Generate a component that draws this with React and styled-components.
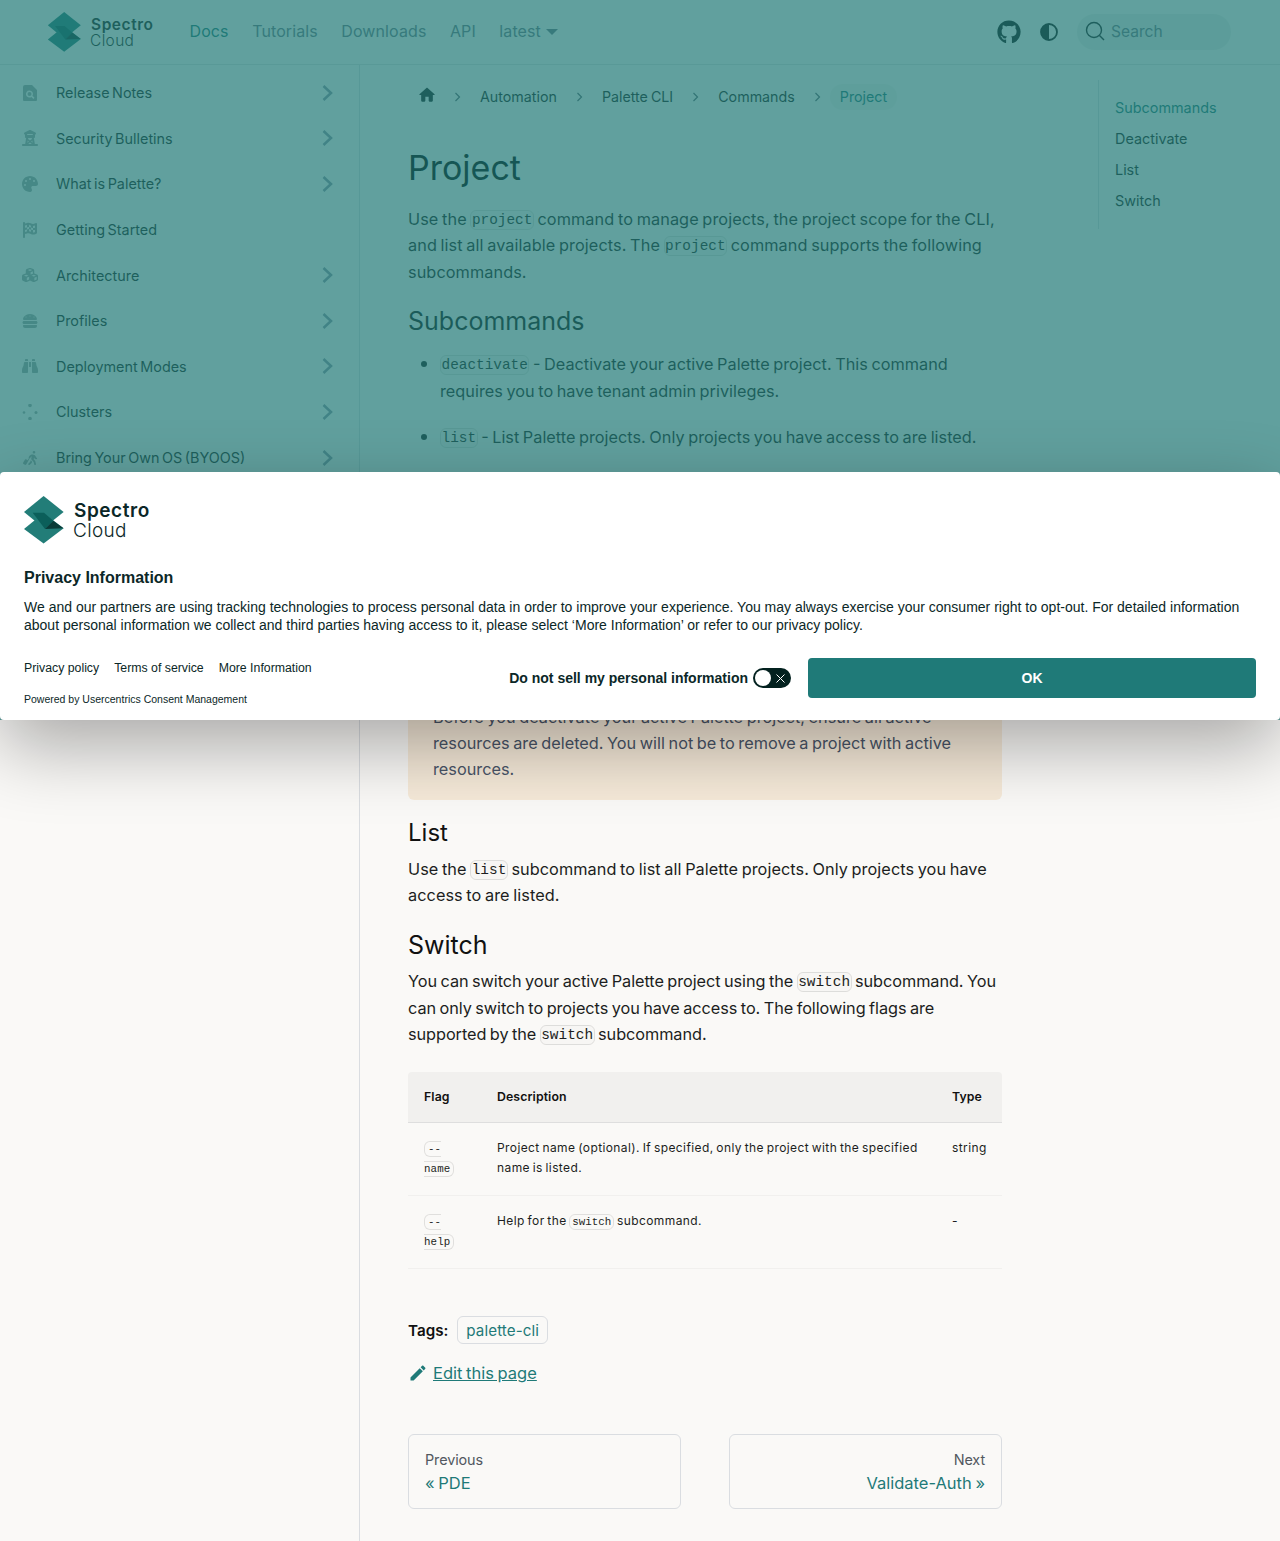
import React from "react";
import styled, { createGlobalStyle } from "styled-components";
import { FaGithub } from "react-icons/fa";
import {
  FaTowerObservation, FaPalette, FaFlagCheckered, FaCubes, FaBurger,
  FaBinoculars, FaPersonWalkingLuggage,
} from "react-icons/fa6";

const TEAL = "#1f7a78";
const Global = createGlobalStyle`
  html, body { margin: 0; padding: 0; background: #faf9f7; }
  body { font-family: Inter, "Noto Sans", sans-serif; color: #111; }
  * { box-sizing: border-box; }
`;

const Page = styled.div`
  position: relative; width: 1280px; height: 1541px; overflow: hidden; background: #faf9f7;
`;
const Navbar = styled.header`
  height: 65px; display: flex; align-items: center; padding: 0 49px 1px 47px;
  border-bottom: 1px solid #e0e0e0;
`;
const NavLinks = styled.nav`
  display: flex; align-items: center; gap: 23.5px; margin: -1px 0 0 36px;
`;
const NavLink = styled.a`
  font-size: 16px; letter-spacing: .1px; color: ${p => (p.$active ? TEAL : "#6f7a88")};
  display: flex; align-items: center; gap: 5px;
`;
const Caret = styled.span`
  width: 0; height: 0; border: 6px solid transparent; border-top: 6px solid #6f7a88; border-bottom: 0; margin-top: 2px;
`;
const NavRight = styled.div`
  margin-left: auto; display: flex; align-items: center;
`;
const GithubIcon = styled(FaGithub)`
  width: 24px; height: 24px; color: #111; margin-right: 19px;
`;
const Search = styled.div`
  width: 154px; height: 36px; border-radius: 18px; background: #ebebea; margin-left: 19px;
  display: flex; align-items: center; padding: 0 0 1px 8px; gap: 6px; color: #6f7a88; font-size: 15.6px;
`;

const LogoWrap = styled.div`
  display: flex; align-items: center; gap: ${p => p.$gap}px; height: ${p => p.$h}px;
`;
const LogoWords = styled.div`
  display: flex; flex-direction: column; font-family: Inter, sans-serif; color: ${p => p.$color};
  font-size: ${p => p.$size}px; line-height: ${p => p.$lh}px; padding-top: 2px;
`;
const LogoTop = styled.span`font-weight: 600; letter-spacing: .55px; margin-left: 1px;`;
const LogoBottom = styled.span`font-weight: 300; letter-spacing: .35px;`;

function Logo({ w, h, gap, size, lh, color }) {
  return (
    <LogoWrap $h={h} $gap={gap}>
      <svg width={w} height={h} viewBox="0 0 40 48">
        <path d="M19.6 0 39.6 16 19.6 32 0 16Z" fill="#227d78" />
        <path d="M19.6 17 39.6 32.3 19.6 47.6 0 33Z" fill="#227d78" />
        <path d="M8.7 16.7H20L29.3 24.7 21 33Z" fill="#0b5f5a" />
        <path d="M21 33 29.3 24.7 39.5 32.3Z" fill="#0a3b38" />
      </svg>
      <LogoWords $size={size} $lh={lh} $color={color}>
        <LogoTop>Spectro</LogoTop>
        <LogoBottom>Cloud</LogoBottom>
      </LogoWords>
    </LogoWrap>
  );
}

const Shell = styled.div`
  display: grid; grid-template-columns: 360px 1fr; height: 1476px;
`;
const Sidebar = styled.aside`
  border-right: 1px solid #dadde1; padding-top: 5px;
`;
const SideItem = styled.div`
  height: 45.6px; display: flex; align-items: center; padding: 0 26px 0 22px;
  font-size: 14.4px; word-spacing: -1.5px; color: #1c1e21;
`;
const SideIcon = styled.span`
  width: 34px; display: flex; color: #a2a8a8;
  svg { width: 16px; height: 16px; display: block; }
`;
const Chevron = styled.svg`
  margin-left: auto; width: 11px; height: 16px; fill: none; stroke: #8f96a8; stroke-width: 2.5;
`;

const FileSearch = () => (
  <svg viewBox="0 0 16 16"><path fill="currentColor" fillRule="evenodd" d="M3 0h7l5 5v10a1 1 0 0 1-1 1H2a1 1 0 0 1-1-1V2a2 2 0 0 1 2-2ZM7.5 5.5a3.5 3.5 0 1 0 1.9 6.4l2 2 1.1-1.1-2-2a3.5 3.5 0 0 0-3-5.3Zm0 1.5a2 2 0 1 1 0 4 2 2 0 0 1 0-4Z" /></svg>
);
const Dots = () => (
  <svg viewBox="0 0 16 16" fill="currentColor"><circle cx="8" cy="1.5" r="1.8" /><circle cx="2" cy="8.5" r="1.3" /><circle cx="14" cy="8.5" r="1.5" /><circle cx="8" cy="14.5" r="1.8" /></svg>
);
const HomeIcon = styled.svg`width: 20px; height: 20px; display: block; margin: -3px -2px 0; fill: currentColor;`;
const PencilIcon = styled.svg`width: 20px; height: 20px; fill: ${TEAL}; flex: none;`;

const items = [
  ["Release Notes", <FileSearch />, true],
  ["Security Bulletins", <FaTowerObservation />, true],
  ["What is Palette?", <FaPalette />, true],
  ["Getting Started", <FaFlagCheckered />, false],
  ["Architecture", <FaCubes />, true],
  ["Profiles", <FaBurger />, true],
  ["Deployment Modes", <FaBinoculars />, true],
  ["Clusters", <Dots />, true],
  ["Bring Your Own OS (BYOOS)", <FaPersonWalkingLuggage />, true],
];

const Main = styled.main`
  display: flex; align-items: flex-start; padding: 19px 0 0 48px;
`;
const Article = styled.article`width: 594px; flex: none;`;
const Crumbs = styled.div`display: flex; align-items: center; height: 26px; margin-left: 1px;`;
const Crumb = styled.span`
  display: flex; align-items: center; height: 26px; padding: 0 10px 2px; border-radius: 13px; font-size: 14.25px;
  word-spacing: -1px; color: ${p => (p.$active ? TEAL : "#1c1e21")}; background: ${p => (p.$active ? "#f1f0ee" : "transparent")};
`;
const Sep = styled.svg`width: 25px; height: 10px; fill: none; stroke: #5f6670; stroke-width: 1.2;`;
const H1 = styled.h1`
  margin: 38px 0 0; font-size: 34px; line-height: 40px; font-weight: 400; color: #000;
`;
const H2 = styled.h2`
  margin: ${p => p.$mt}px 0 0; font-size: 25px; line-height: 32px; font-weight: 400; color: #111;
`;
const H3 = styled.h3`
  margin: ${p => p.$mt}px 0 0; font-size: 24px; line-height: 30px; font-weight: 400; color: #111;
`;
const P = styled.p`
  margin: ${p => p.$mt}px 0 0; font-size: 16.3px; line-height: 26.4px; word-spacing: -1px; color: #1c1e21;
  letter-spacing: ${p => p.$ls || 0}px;
`;
const Code = styled.code`
  font-family: "Liberation Mono", monospace; font-size: 14.4px; line-height: 1; letter-spacing: 0; word-spacing: 0; padding: 1px .5px; border: 1px solid rgba(0,0,0,.1);
  border-radius: 6px; background: rgba(0,0,0,.01); position: relative; top: -1px;
`;
const List = styled.ul`margin: 13px 0 0; padding: 0 0 0 32px;`;
const Li = styled.li`
  font-size: 16.3px; line-height: 26.4px; word-spacing: -1px; color: #1c1e21; margin-bottom: 19px;
  &::marker { font-size: 20px; }
`;
const Alert = styled.div`
  margin-top: 17px; padding: 17px 25px 18px; border-radius: 6px; background: #f6ead9;
  font-size: 16.3px; line-height: 26px; word-spacing: -1px; color: #4a5568;
`;
const AlertTitle = styled.div`font-weight: 700; text-transform: uppercase; font-size: 14px; margin-bottom: 14px;`;

const Table = styled.table`
  width: 594px; margin-top: 24px; border-collapse: collapse; table-layout: fixed; font-size: 12px; letter-spacing: .4px; word-spacing: -1px;
`;
const Th = styled.th`
  height: 51px; padding: 0 16px; text-align: left; font-weight: 600; background: #f1f0ee; border-bottom: 1px solid #dedede;
  font-size: 12.3px; color: #111; letter-spacing: .1px;
  &:first-child { border-top-left-radius: 4px; } &:last-child { border-top-right-radius: 4px; }
`;
const Td = styled.td`
  padding: 15px 16px 18px; vertical-align: top; line-height: 19.5px; color: #1c1e21; border-bottom: 1px solid #f1f0ee;
`;
const TinyCode = styled.code`
  font-family: "Liberation Mono", monospace; font-size: 10.8px; line-height: 1; letter-spacing: 0; word-spacing: 0; padding: 1px 2px; border: 1px solid rgba(0,0,0,.1); border-radius: 6px;
`;
const FlagCode = styled(TinyCode)`padding: 1px 3px; letter-spacing: .1px;`;

const TagRow = styled.div`display: flex; align-items: center; gap: 9px; margin-top: 47px;`;
const TagLabel = styled.b`font-size: 15.2px; font-weight: 600;`;
const Tag = styled.span`
  height: 28px; padding: 0 8px; border: 1px solid #dadde1; border-radius: 6px; display: flex; align-items: center;
  color: ${TEAL}; font-size: 15.15px; letter-spacing: .1px;
`;
const EditRow = styled.a`
  display: flex; align-items: center; gap: 5px; margin-top: 15px; height: 28px; color: ${TEAL}; font-size: 16.5px; word-spacing: -1px;
  text-decoration: underline;
`;
const Pager = styled.div`
  display: grid; grid-template-columns: 273px 273px; justify-content: space-between; margin-top: 47px;
`;
const PageCard = styled.div`
  height: 75px; padding: 15px 16px; border: 1px solid #dadde1; border-radius: 6px; text-align: ${p => (p.$right ? "right" : "left")};
`;
const CardSub = styled.div`font-size: 14.4px; line-height: 20px; color: #525860; letter-spacing: -.1px;`;
const CardTitle = styled.div`font-size: 16.5px; line-height: 26px; color: ${TEAL}; word-spacing: -1px;`;

const Toc = styled.aside`
  margin: -4px 0 0 96px; padding: 12px 0 13px 16px; border-left: 1px solid #dadde1; width: 160px;
`;
const TocLink = styled.div`
  font-size: 14.4px; line-height: 31px; color: ${p => (p.$active ? TEAL : "#1c1e21")};
`;

const Overlay = styled.div`
  position: absolute; top: 0; left: 0; width: 100%; height: 720px; background: rgba(32,122,120,.7);
`;
const Banner = styled.section`
  position: absolute; top: 472px; left: 0; width: 100%; height: 248px; padding: 24px; background: #fff; border-radius: 4px;
  box-shadow: 0 26px 74px rgba(0,0,0,.33); font-family: "Liberation Sans", Arial, sans-serif; color: #0b2727;
`;
const BannerTitle = styled.div`margin-top: 24px; font-size: 16px; line-height: 20px; font-weight: 700;`;
const BannerText = styled.div`margin-top: 10px; font-size: 14px; line-height: 18px;`;
const BannerFooter = styled.div`display: flex; justify-content: space-between; align-items: flex-start; margin-top: 24px;`;
const BannerLinks = styled.div`display: flex; gap: 15px; font-size: 12.3px; line-height: 20px;`;
const Powered = styled.div`margin-top: 14px; font-size: 10.5px; line-height: 14px;`;
const Controls = styled.div`display: flex; align-items: center;`;
const Opt = styled.span`font-size: 14px; font-weight: 700;`;
const Toggle = styled.span`
  position: relative; width: 38px; height: 20px; border-radius: 10px; background: #03211f; margin: 0 17px 0 5px; display: block;
`;
const Knob = styled.span`
  position: absolute; left: 2px; top: 2px; width: 16px; height: 16px; border-radius: 50%; background: #fff;
`;
const ToggleX = styled.svg`
  position: absolute; right: 6px; top: 5.5px; width: 9px; height: 9px; stroke: #fff; stroke-width: 1;
`;
const OkButton = styled.button`
  width: 448px; height: 40px; border: 0; border-radius: 4px; background: ${TEAL}; color: #fff;
  font: 700 14px "Liberation Sans", Arial, sans-serif;
`;

const Separator = () => (<Sep viewBox="0 0 25 10"><path d="M10.5 1 14.5 5 10.5 9" /></Sep>);

export default function App() {
  return (
    <Page>
      <Global />
      <Navbar>
        <Logo w={35} h={40} gap={8} size={15.5} lh={16} color="#1c1e21" />
        <NavLinks>
          <NavLink $active>Docs</NavLink>
          <NavLink>Tutorials</NavLink>
          <NavLink>Downloads</NavLink>
          <NavLink>API</NavLink>
          <NavLink>latest<Caret /></NavLink>
        </NavLinks>
        <NavRight>
          <GithubIcon />
          <svg width="18" height="18" viewBox="0 0 18 18"><circle cx="9" cy="9" r="8" fill="none" stroke="#111" strokeWidth="1.8" /><path d="M9 1a8 8 0 0 0 0 16Z" fill="#111" /></svg>
          <Search>
            <svg width="20" height="20" viewBox="0 0 20 20" fill="none" stroke="#1c1e21" strokeWidth="1.4"><circle cx="9" cy="9" r="7.5" /><path d="M14.5 14.5 19 19" /></svg>
            Search
          </Search>
        </NavRight>
      </Navbar>
      <Shell>
        <Sidebar>
          {items.map(([label, icon, more]) => (
            <SideItem key={label}>
              <SideIcon>{icon}</SideIcon>
              {label}
              {more && <Chevron viewBox="0 0 11 16"><path d="M1.5 1 9 8 1.5 15" /></Chevron>}
            </SideItem>
          ))}
        </Sidebar>
        <Main>
          <Article>
            <Crumbs>
              <Crumb><HomeIcon viewBox="0 0 24 24"><path d="M10 19v-5h4v5c0 .55.45 1 1 1h3c.55 0 1-.45 1-1v-7h1.7c.46 0 .68-.57.33-.87L12.67 3.6c-.38-.34-.96-.34-1.34 0l-8.36 7.53c-.34.3-.13.87.33.87H5v7c0 .55.45 1 1 1h3c.55 0 1-.45 1-1z" /></HomeIcon></Crumb><Separator />
              <Crumb>Automation</Crumb><Separator />
              <Crumb>Palette CLI</Crumb><Separator />
              <Crumb>Commands</Crumb><Separator />
              <Crumb $active>Project</Crumb>
            </Crumbs>
            <H1>Project</H1>
            <P $mt={18} $ls={0.07}>Use the <Code>project</Code> command to manage projects, the project scope for the CLI, and list all available projects. The <Code>project</Code> command supports the following subcommands.</P>
            <H2 $mt={20}>Subcommands</H2>
            <List>
              <Li><Code>deactivate</Code> - Deactivate your active Palette project. This command requires you to have tenant admin privileges.</Li>
              <Li><Code>list</Code> - List Palette projects. Only projects you have access to are listed.</Li>
              <Li><Code>switch</Code> - Switch your active Palette project.</Li>
            </List>
            <H3 $mt={40}>Deactivate</H3>
            <P $mt={10}>Use the <Code>deactivate</Code> subcommand to deactivate your active Palette project. This command requires tenant admin privileges.</P>
            <Alert>
              <AlertTitle>warning</AlertTitle>
              Before you deactivate your active Palette project, ensure all active resources are deleted. You will not be to remove a project with active resources.
            </Alert>
            <H3 $mt={18}>List</H3>
            <P $mt={8} $ls={0.05}>Use the <Code>list</Code> subcommand to list all Palette projects. Only projects you have access to are listed.</P>
            <H2 $mt={21}>Switch</H2>
            <P $mt={7} $ls={-0.07}>You can switch your active Palette project using the <Code>switch</Code> subcommand. You can only switch to projects you have access to. The following flags are supported by the <Code>switch</Code> subcommand.</P>
            <Table>
              <colgroup><col width="73" /><col width="455" /><col width="66" /></colgroup>
              <thead><tr><Th>Flag</Th><Th>Description</Th><Th>Type</Th></tr></thead>
              <tbody>
                <tr>
                  <Td><FlagCode>--name</FlagCode></Td>
                  <Td>Project name (optional). If specified, only the project with the specified name is listed.</Td>
                  <Td>string</Td>
                </tr>
                <tr>
                  <Td><FlagCode>--help</FlagCode></Td>
                  <Td>Help for the <TinyCode>switch</TinyCode> subcommand.</Td>
                  <Td>-</Td>
                </tr>
              </tbody>
            </Table>
            <TagRow><TagLabel>Tags:</TagLabel><Tag>palette-cli</Tag></TagRow>
            <EditRow>
              <PencilIcon viewBox="0 0 24 24"><path d="M3 17.25V21h3.75L17.81 9.94l-3.75-3.75L3 17.25zM20.71 7.04c.39-.39.39-1.02 0-1.41l-2.34-2.34c-.39-.39-1.02-.39-1.41 0l-1.83 1.83 3.75 3.75 1.83-1.83z" /></PencilIcon>
              Edit this page
            </EditRow>
            <Pager>
              <PageCard><CardSub>Previous</CardSub><CardTitle>« PDE</CardTitle></PageCard>
              <PageCard $right><CardSub>Next</CardSub><CardTitle>Validate-Auth »</CardTitle></PageCard>
            </Pager>
          </Article>
          <Toc>
            <TocLink $active>Subcommands</TocLink>
            <TocLink>Deactivate</TocLink>
            <TocLink>List</TocLink>
            <TocLink>Switch</TocLink>
          </Toc>
        </Main>
      </Shell>
      <Overlay />
      <Banner>
        <Logo w={40} h={48} gap={9} size={19} lh={20} color="#0b2727" />
        <BannerTitle>Privacy Information</BannerTitle>
        <BannerText>We and our partners are using tracking technologies to process personal data in order to improve your experience. You may always exercise your consumer right to opt-out. For detailed information about personal information we collect and third parties having access to it, please select ‘More Information’ or refer to our privacy policy.</BannerText>
        <BannerFooter>
          <div>
            <BannerLinks><span>Privacy policy</span><span>Terms of service</span><span>More Information</span></BannerLinks>
            <Powered>Powered by Usercentrics Consent Management</Powered>
          </div>
          <Controls>
            <Opt>Do not sell my personal information</Opt>
            <Toggle><Knob /><ToggleX viewBox="0 0 9 9"><path d="M.5.5l8 8M8.5.5l-8 8" /></ToggleX></Toggle>
            <OkButton>OK</OkButton>
          </Controls>
        </BannerFooter>
      </Banner>
    </Page>
  );
}
